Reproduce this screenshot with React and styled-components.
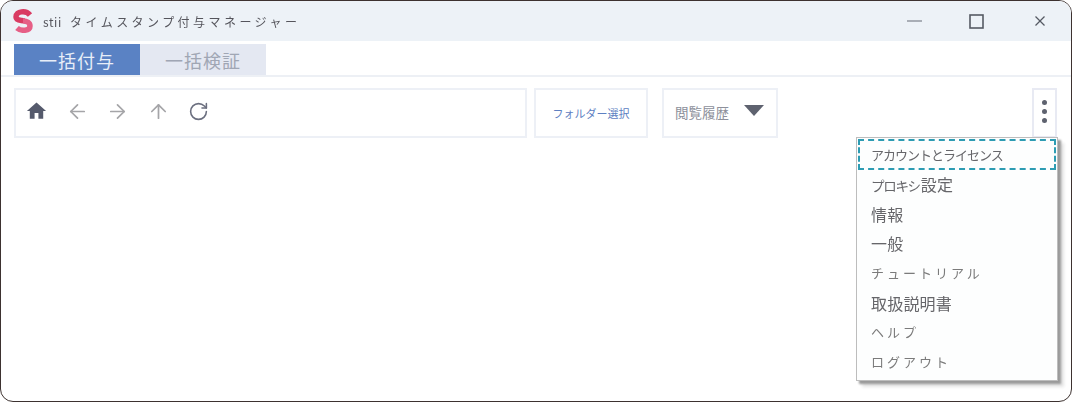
import styled, { createGlobalStyle } from "styled-components";
import { ArrowLeft, ArrowRight, ArrowUp, RotateCw, X } from "lucide-react";
import { MdHome } from "react-icons/md";

const GlobalStyle = createGlobalStyle`
  html, body {
    margin: 0;
    padding: 0;
    background: #fff;
  }
  body {
    font-family: "Noto Sans CJK JP", "Noto Sans", sans-serif;
  }
`;

const Window = styled.div`
  position: relative;
  box-sizing: border-box;
  width: 1072px;
  height: 402px;
  border: 1.5px solid #3d3230;
  border-radius: 13px;
  overflow: hidden;
  background: #fff;
  filter: blur(0.45px);
`;

const TitleBar = styled.div`
  display: flex;
  align-items: center;
  height: 40px;
  padding-left: 11px;
  background: #edf2f7;
`;

const Title = styled.div`
  margin-left: 9px;
  font-size: 12px;
  color: #55555c;
  letter-spacing: 3.45px;
`;

const AppName = styled.span`
  letter-spacing: 0.6px;
  margin-right: 2px;
`;

const WindowControls = styled.div`
  display: flex;
  align-items: center;
  margin-left: auto;
  padding-right: 22px;
  color: #555a63;
`;

const MinimizeGlyph = styled.span`
  width: 15px;
  height: 2px;
  margin-right: 47px;
  background: #a9aeb6;
`;

const MaximizeGlyph = styled.svg`
  margin-right: 47px;
`;

const TabBar = styled.div`
  display: flex;
  height: 31px;
  margin-top: 3px;
  padding-left: 13px;
  border-bottom: 2px solid #edf0f5;
`;

const Tab = styled.div`
  display: flex;
  align-items: center;
  justify-content: center;
  width: 126px;
  height: 31px;
  font-size: 18px;
  letter-spacing: 1px;
  background: ${props => (props.active ? "#5a82c4" : "#e4e8f2")};
  color: ${props => (props.active ? "#e8eef8" : "#a0a6b4")};
`;

const Toolbar = styled.div`
  display: flex;
  align-items: flex-start;
  padding: 11px 14px 0 13px;
`;

const ToolBox = styled.div`
  box-sizing: border-box;
  display: flex;
  align-items: center;
  height: 50px;
  border: 2px solid #edf0f6;
  background: #fff;
`;

const NavBox = styled(ToolBox)`
  width: 513px;
  gap: 17.5px;
  padding: 0 0 4px 9px;
`;

const NavIcon = styled.span`
  display: flex;
  width: 23px;
  justify-content: center;
  color: ${props => props.color};
`;

const FolderButton = styled(ToolBox)`
  justify-content: center;
  width: 114px;
  margin-left: 7px;
  font-size: 11px;
  color: #5d80c2;
`;

const HistoryButton = styled(ToolBox)`
  width: 116px;
  margin-left: 14px;
  padding: 0 12px 2px 11px;
  justify-content: space-between;
  font-size: 13.5px;
  color: #8d909b;
`;

const Caret = styled.span`
  width: 0;
  height: 0;
  margin-bottom: 3px;
  border-left: 10px solid transparent;
  border-right: 10px solid transparent;
  border-top: 11px solid #5e626f;
`;

const MoreButton = styled(ToolBox)`
  flex-direction: column;
  justify-content: center;
  gap: 4px;
  width: 25px;
  margin-left: auto;
  border-color: #e8eaf3;
  padding-bottom: 4px;
`;

const Dot = styled.span`
  width: 5px;
  height: 5px;
  border-radius: 50%;
  background: #5e626f;
`;

const Menu = styled.div`
  position: absolute;
  top: 136px;
  right: 13px;
  box-sizing: border-box;
  width: 202px;
  height: 244px;
  padding: 1px;
  background: #fdfefe;
  border: 1px solid #bdbdbd;
  box-shadow: 3px 3px 2px #9a9a9a, 6px 6px 3px #e4e4e4;
`;

const MenuItem = styled.div`
  box-sizing: border-box;
  display: flex;
  align-items: baseline;
  height: 29.7px;
  padding: 3px 0 0 13px;
  font-size: ${props => (props.spaced ? "13px" : "16px")};
  line-height: 22px;
  letter-spacing: ${props => (props.spaced ? "3px" : "0.2px")};
  color: ${props => (props.spaced ? "#7b7b7b" : "#66666a")};
`;

const Kana = styled.span`
  font-size: 13.5px;
  letter-spacing: -1.3px;
  margin-right: 1px;
`;

const FocusedItem = styled(MenuItem)`
  height: 31px;
  padding: 3px 0 0 11px;
  font-size: 13px;
  letter-spacing: -1px;
  border: 2px dashed #2d9cb3;
`;

const Logo = () => (
  <svg width="22" height="24" viewBox="0 0 22 24">
    <path
      d="M18 6 C14 1 4 2 4 8 C4 12 10 11 12 12"
      fill="none"
      stroke="#d93b62"
      strokeWidth="5.5"
    />
    <path
      d="M11 12 C15 12 18 14 18 17 C18 22 9 22.5 5 19"
      fill="none"
      stroke="#e65f86"
      strokeWidth="5.5"
    />
  </svg>
);

const menuItems = [
  { label: "情報" },
  { label: "一般" },
  { label: "チュートリアル", spaced: true },
  { label: "取扱説明書" },
  { label: "ヘルプ", spaced: true },
  { label: "ログアウト", spaced: true },
];

export default function App() {
  return (
    <Window>
      <GlobalStyle />
      <TitleBar>
        <Logo />
        <Title>
          <AppName>stii</AppName> タイムスタンプ付与マネージャー
        </Title>
        <WindowControls>
          <MinimizeGlyph />
          <MaximizeGlyph width="15" height="15" viewBox="0 0 15 15">
            <rect x="1" y="1" width="13" height="13" fill="none" stroke="currentColor" strokeWidth="1.6" />
          </MaximizeGlyph>
          <X size={18} strokeWidth={1.6} strokeLinecap="butt" />
        </WindowControls>
      </TitleBar>
      <TabBar>
        <Tab active>一括付与</Tab>
        <Tab>一括検証</Tab>
      </TabBar>
      <Toolbar>
        <NavBox>
          <NavIcon color="#555a6c"><MdHome size={24} /></NavIcon>
          <NavIcon color="#a5a5a8"><ArrowLeft size={23} strokeWidth={1.8} /></NavIcon>
          <NavIcon color="#a5a5a8"><ArrowRight size={23} strokeWidth={1.8} /></NavIcon>
          <NavIcon color="#a5a5a8"><ArrowUp size={23} strokeWidth={1.8} /></NavIcon>
          <NavIcon color="#6b6f7f"><RotateCw size={21} strokeWidth={1.8} /></NavIcon>
        </NavBox>
        <FolderButton>フォルダー選択</FolderButton>
        <HistoryButton>
          閲覧履歴
          <Caret />
        </HistoryButton>
        <MoreButton>
          <Dot />
          <Dot />
          <Dot />
        </MoreButton>
      </Toolbar>
      <Menu>
        <FocusedItem>アカウントとライセンス</FocusedItem>
        <MenuItem>
          <Kana>プロキシ</Kana>設定
        </MenuItem>
        {menuItems.map(item => (
          <MenuItem key={item.label} spaced={item.spaced}>
            {item.label}
          </MenuItem>
        ))}
      </Menu>
    </Window>
  );
}
